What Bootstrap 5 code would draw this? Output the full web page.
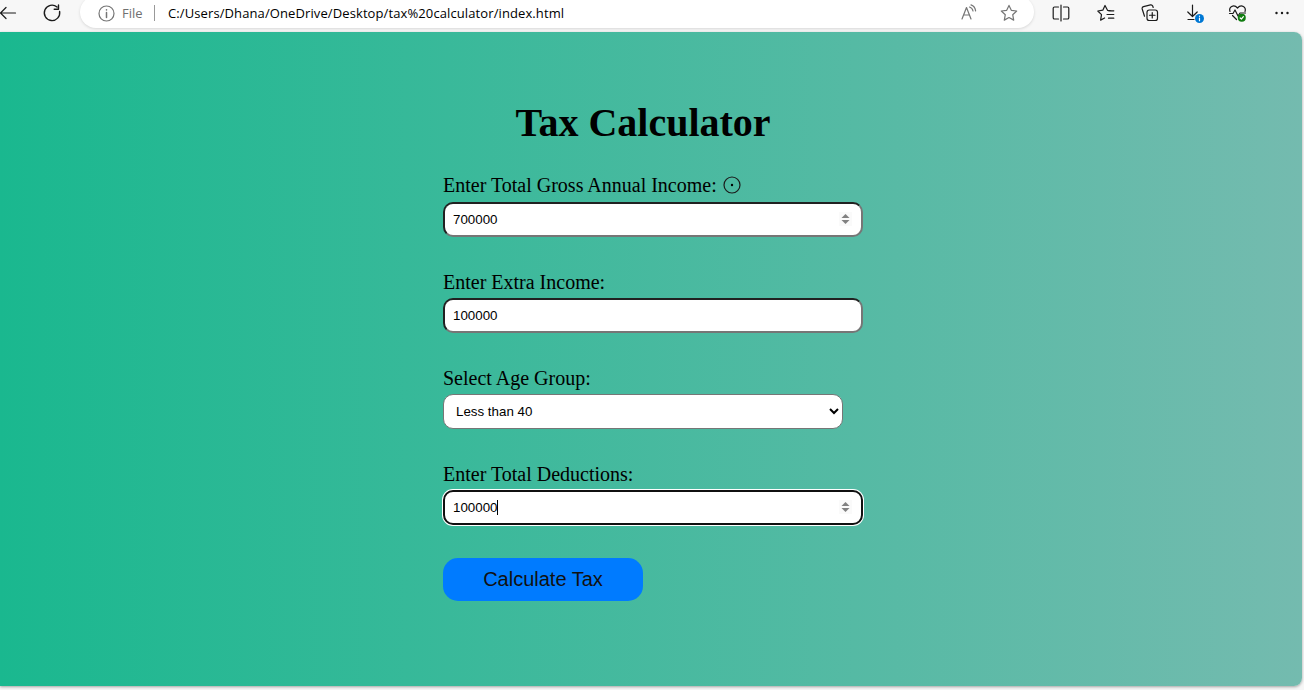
<!DOCTYPE html>
<html lang="en">
<head>
<meta charset="utf-8">
<title>Tax Calculator</title>
<link href="https://cdn.jsdelivr.net/npm/bootstrap@5.3.0/dist/css/bootstrap.min.css" rel="stylesheet">
<style>
body{background:#f7f7f7;height:690px;overflow:hidden;color:#000}
svg{display:block;flex:none;fill:none;stroke:#1b1b1b;stroke-width:1.2;stroke-linecap:round;stroke-linejoin:round}
.toolbar{height:32px;font:14px/20px "Open Sans","Noto Sans",sans-serif}
.toolbar>svg{margin-top:-6px}
.address{width:954px;height:32px;margin:-8px 18px 0 18px;padding:2px 16px 0 18px;border-radius:16px;background:#fff;box-shadow:0 1px 3px rgba(0,0,0,.13)}
.muted-ico{stroke:#757575}
.scheme{color:#707070;margin-left:7px;width:22px;white-space:nowrap;font-size:13px}
.divider{width:1px;height:16px;background:#999;margin:0 13px 0 10px}
.url{font-size:13px;letter-spacing:.105px;white-space:nowrap}
.viewport{width:1302px;height:654px;border-radius:0 8px 8px 0;background:linear-gradient(to right,#1ab88f,#74bbaf);box-shadow:0 1px 3px rgba(0,0,0,.35);font-family:"Liberation Serif",serif;padding:67px 0 0 443px}
.viewport h1{width:400px;font-size:40px;line-height:48px;font-weight:700;margin:0 0 27px;text-align:center}
.field{width:420px;height:63px;margin-bottom:33px}
.field label{height:28px;font-size:20px;line-height:23px;white-space:nowrap}
.field label.d-block{padding-top:1px}
.box{width:420px;height:35px;border:2px inset #767676;border-radius:10px;padding:0 8px;background:#fff;font:13.333px "Liberation Sans",sans-serif;color:#000;outline:0;display:block}
.box-select{width:400px;border:1px solid #767676}
.box-active{border:2px solid #101010;box-shadow:0 0 0 1px #fff}
.spin{right:11px;top:10px;background:#fafafa;stroke:none;fill:#818181}
.caret{left:54px;top:10px;width:1px;height:15px;background:#000}
.btn-calc,.btn-calc:hover{width:200px;height:43px;border:0;border-radius:15px;background:#007bff;color:#111;font:20px "Liberation Sans",sans-serif;padding:0}
</style>
<script src="https://cdn.jsdelivr.net/npm/bootstrap@5.3.0/dist/js/bootstrap.bundle.min.js"></script>
</head>
<body>
<nav class="toolbar d-flex align-items-center overflow-hidden">
  <svg width="17" height="20" viewBox="0 0 17 20"><path d="M15.500 10H.8M6 4.500.5 10 6 15.500"/></svg>
  <svg width="20" height="20" viewBox="0 0 20 20" style="margin-left:25px"><path d="M17.600 8.500A7.700 7.700 0 1 1 15 4M16.500 2v4.300h-4.300" stroke-width="1.400"/></svg>
  <div class="address d-flex align-items-center">
    <svg class="muted-ico" width="17" height="17" viewBox="0 0 17 17"><circle cx="8.500" cy="8.500" r="7.500"/><path d="M8.500 7.500v5M8.500 4.800v.1" stroke-width="1.500"/></svg>
    <span class="scheme">File</span><span class="divider"></span>
    <span class="url">C:/Users/Dhana/OneDrive/Desktop/tax%20calculator/index.html</span>
    <svg class="muted-ico ms-auto" width="18" height="18" viewBox="0 0 18 18"><path d="m2 15 4.500-11.500L11 15M3.700 11h5.600M9.500 3q3 1 3.500 4M11 .9q4 1.300 4.600 6"/></svg>
    <svg class="muted-ico" width="18" height="18" viewBox="0 0 18 18" style="margin-left:22px"><path d="m9 1.400 2.300 4.900 5.400.7-4 3.700 1 5.400L9 13.500l-4.700 2.600 1-5.400-4-3.700 5.400-.7z"/></svg>
  </div>
  <svg width="18" height="18" viewBox="0 0 18 18"><path d="M6.500 3h-4q-1.300 0-1.300 1.300v9.400Q1.200 15 2.500 15h4M11.500 3h4q1.300 0 1.300 1.300v9.400q0 1.300-1.300 1.300h-4M9 1v16"/></svg>
  <svg width="18" height="18" viewBox="0 0 18 18" style="margin-left:27px"><path d="m14.800 6.800-4.300-.5L8 1.500 5.800 6.200l-5 .8 3.700 3.600-.9 5.500 4-2.100M11.500 6.800h5.300M10 10.500h6.800M11.500 14.200h5.300"/></svg>
  <svg width="18" height="18" viewBox="0 0 18 18" style="margin-left:26px"><rect x="6" y="6" width="10.500" height="10.500" rx="2.300"/><path d="M11.250 8.500v5.500M8.500 11.250H14M3.500 12.200 1.200 5Q.8 3.200 2.500 2.700l7-1.800q1.600-.3 2.200 1.100l.5 1.500"/></svg>
  <svg width="20" height="20" viewBox="0 0 20 20" style="margin-left:27px"><path d="M6.500 2v11M1.800 9l4.700 4.500L11.200 9M2 16.500h6"/><circle cx="13.500" cy="15.500" r="4.500" fill="#0078d4" stroke="none"/><path d="M13.500 15.200v2.500M13.500 13.200v.1" stroke="#fff"/></svg>
  <svg width="20" height="20" viewBox="0 0 20 20" style="margin-left:22px"><path d="M2 8.500C.5 4.500 5.500.5 9.500 5c4-4.500 9-.5 7.500 3.500M1.500 10.500H5l2-3.500 3 6 2-3h5.500M4.500 12.500l4 4"/><circle cx="13.800" cy="14.800" r="4" fill="#107c10" stroke="none"/><path d="m12.200 15 1.200 1 2-2.300" stroke="#fff"/></svg>
  <svg width="16" height="16" viewBox="0 0 16 16" style="margin-left:26px"><path d="M2.500 8h.01M8 8h.01M13.500 8h.01" stroke-width="2.400"/></svg>
</nav>
<main class="viewport">
  <h1>Tax Calculator</h1>
  <div class="field">
    <label class="d-flex" for="income">Enter Total Gross Annual Income:<svg width="18" height="18" viewBox="0 0 18 18" style="margin:2px 0 0 6px"><circle cx="9" cy="9" r="8"/><circle cx="9" cy="9" r="1.200" fill="#000" stroke="none"/></svg></label>
    <div class="position-relative"><input class="box" id="income" value="700000"><svg class="spin position-absolute" width="13" height="14" viewBox="0 0 13 14"><path d="M2.500 6h8l-4-4zM2.500 8h8l-4 4z"/></svg></div>
  </div>
  <div class="field">
    <label class="d-block" for="extra">Enter Extra Income:</label>
    <input class="box" id="extra" value="100000">
  </div>
  <div class="field">
    <label class="d-block" for="age">Select Age Group:</label>
    <select class="box box-select" id="age"><option>Less than 40</option></select>
  </div>
  <div class="field">
    <label class="d-block" for="deduct">Enter Total Deductions:</label>
    <div class="position-relative"><input class="box box-active" id="deduct" value="100000"><span class="caret position-absolute"></span><svg class="spin position-absolute" width="13" height="14" viewBox="0 0 13 14"><path d="M2.500 6h8l-4-4zM2.500 8h8l-4 4z"/></svg></div>
  </div>
  <button class="btn btn-calc" type="button">Calculate Tax</button>
</main>
</body>
</html>
